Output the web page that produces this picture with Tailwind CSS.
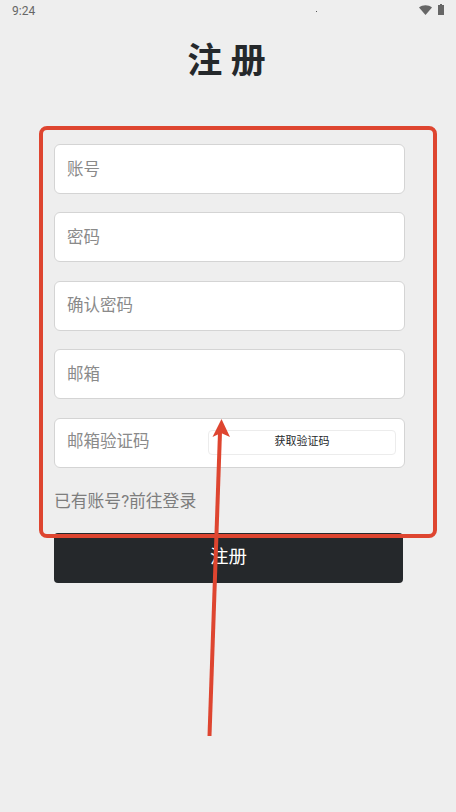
<!DOCTYPE html>
<html lang="en">
<head>
    <meta charset="UTF-8">
    <meta name="viewport" content="width=device-width, initial-scale=1.0">
    <title>注册</title>
    <script src="https://cdn.jsdelivr.net/npm/@tailwindcss/browser@4"></script>
</head>
<body class="bg-[#eeeeee] font-['Roboto','Noto_Sans_CJK_SC',sans-serif]">
    <div class="relative w-[456px] h-[812px] overflow-hidden">
        <!-- status bar -->
        <div class="flex items-center justify-between h-5 pl-3 pr-3 pt-0.5 text-xs text-[#666666]">
            <span>9:24</span>
            <div class="flex items-center gap-[6px] -mt-[3px]">
                <svg width="13" height="10" viewBox="0 0 13 10"><path d="M0 2.5 C3.5 -0.5 9.5 -0.5 13 2.5 L6.5 10 Z" fill="#666666"/></svg>
                <svg width="6" height="11" viewBox="0 0 6 11"><path d="M2 0 H4 V1 H6 V11 H0 V1 H2 Z" fill="#666666"/></svg>
            </div>
        </div>
        <span class="absolute left-[316px] top-[11px] w-px h-px bg-[#555555]"></span>

        <h1 class="mt-[21px] pr-[3px] text-center text-[35px] leading-[42px] font-bold text-[#25282b]">注 册</h1>

        <!-- form -->
        <form class="mt-[61px] ml-[54px] w-[351px] flex flex-col gap-[18.4px]">
            <input type="text" placeholder="账号" class="h-[50px] w-full px-3 bg-white border border-[#d4d4d4] rounded-md text-[16.5px] placeholder:text-[#8a8a8a]">
            <input type="password" placeholder="密码" class="h-[50px] w-full px-3 bg-white border border-[#d4d4d4] rounded-md text-[16.5px] placeholder:text-[#8a8a8a]">
            <input type="password" placeholder="确认密码" class="h-[50px] w-full px-3 bg-white border border-[#d4d4d4] rounded-md text-[16.5px] placeholder:text-[#8a8a8a]">
            <input type="text" placeholder="邮箱" class="h-[50px] w-full px-3 bg-white border border-[#d4d4d4] rounded-md text-[16.5px] placeholder:text-[#8a8a8a]">
            <div class="h-[50px] w-full flex items-center justify-between pl-3 pr-2 bg-white border border-[#d4d4d4] rounded-md">
                <input type="text" placeholder="邮箱验证码" class="w-[140px] text-[16.5px] placeholder:text-[#8a8a8a]">
                <button type="button" class="w-[188px] h-[25px] bg-white border border-[#ececec] rounded text-[11px] text-[#25282b]">获取验证码</button>
            </div>
            <a class="mt-[3px] h-6 text-[16.8px] leading-6 text-[#7d7d7d]">已有账号?前往登录</a>
            <button type="button" class="mt-[1.5px] h-[50px] w-[349px] bg-[#25282b] rounded text-white text-[18.5px]">注册</button>
        </form>

        <!-- red annotation over the form -->
        <div class="absolute left-[39px] top-[126px] w-[398px] h-[412px] border-4 border-[#de4530] rounded-lg pointer-events-none"></div>
        <svg class="absolute left-0 top-0 pointer-events-none" width="456" height="812" viewBox="0 0 456 812">
            <line x1="209.5" y1="736" x2="220" y2="432" stroke="#de4530" stroke-width="4"/>
            <path d="M221.5 419 L230 437 L221 433 L212.5 437 Z" fill="#de4530"/>
        </svg>
    </div>
</body>
</html>
